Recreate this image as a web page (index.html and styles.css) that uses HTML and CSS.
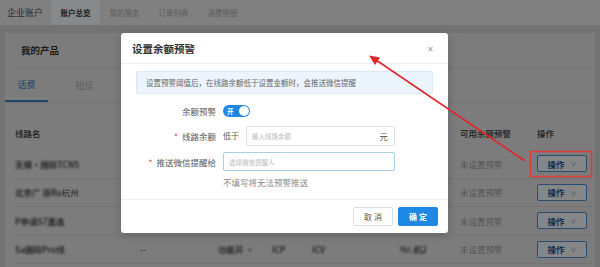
FILE: index.html
```html
<!DOCTYPE html>
<html lang="zh-CN">
<head>
    <meta charset="UTF-8">
    <meta name="viewport" content="width=device-width, initial-scale=1.0">
    <title>设置余额预警 - 企业账户</title>
    <link rel="stylesheet" href="styles.css">
</head>
<body>
    <div class="page">
        <nav class="topnav">
            <div class="brand">企业账户</div>
            <a class="nav-tab active">账户总览</a>
            <a class="nav-tab">我的服务</a>
            <a class="nav-tab">订单列表</a>
            <a class="nav-tab">消费明细</a>
        </nav>

        <div class="main">
            <div class="card">
                <div class="card-header">我的产品</div>
                <div class="tabs">
                    <div class="tab active">话费</div>
                    <div class="tab">短信</div>
                </div>

                <!-- middle columns sit under the dialog, so only the visible cells carry text -->
                <div class="table">
                    <div class="tr th">
                        <div>线路名</div>
                        <div></div>
                        <div></div>
                        <div></div>
                        <div></div>
                        <div></div>
                        <div>可用余额预警</div>
                        <div>操作</div>
                    </div>
                    <div class="tr">
                        <div class="blur">无锡·国际TCN5</div>
                        <div></div><div></div><div></div><div></div><div></div>
                        <div class="muted">未设置预警</div>
                        <div><button class="op-btn">操作 <span class="chev">∨</span></button></div>
                    </div>
                    <div class="tr">
                        <div><span class="blur">北京广 浙Ru</span>杭州</div>
                        <div></div><div></div><div></div><div></div><div></div>
                        <div class="muted">未设置预警</div>
                        <div><button class="op-btn">操作 <span class="chev">∨</span></button></div>
                    </div>
                    <div class="tr">
                        <div class="blur">P申请S7直连</div>
                        <div></div><div></div><div></div><div></div><div></div>
                        <div class="muted">未设置预警</div>
                        <div><button class="op-btn">操作 <span class="chev">∨</span></button></div>
                    </div>
                    <div class="tr">
                        <div class="blur">Sa国际Pro线</div>
                        <div>--</div>
                        <div class="blur">功能开 ·</div>
                        <div class="blur">ICP</div>
                        <div class="blur">ICV</div>
                        <div class="blur">%!.机2</div>
                        <div class="muted">未设置预警</div>
                        <div><button class="op-btn">操作 <span class="chev">∨</span></button></div>
                    </div>
                </div>
            </div>
        </div>

        <div class="mask"></div>

        <div class="modal">
            <div class="modal-header">
                <span class="modal-title">设置余额预警</span>
                <span class="modal-close">✕</span>
            </div>
            <div class="modal-body">
                <div class="alert">设置预警阈值后，在线路余额低于设置金额时，会推送微信提醒</div>
                <div class="form">
                    <div class="form-row row-switch">
                        <label class="form-label">余额预警</label>
                        <div class="switch"><span class="switch-text">开</span><span class="knob"></span></div>
                    </div>
                    <div class="form-row row-input">
                        <label class="form-label"><span class="req">*</span>线路余额</label>
                        <div class="inline">
                            <span class="prefix">低于</span>
                            <div class="input amount">
                                <span class="placeholder">输入线路余额</span>
                                <span class="suffix">元</span>
                            </div>
                        </div>
                    </div>
                    <div class="form-row row-input">
                        <label class="form-label"><span class="req">*</span>推送微信提醒给</label>
                        <div class="input select focus">
                            <span class="placeholder">选择微信提醒人</span>
                        </div>
                    </div>
                    <div class="form-help">不填写将无法预警推送</div>
                </div>
            </div>
            <div class="modal-footer">
                <button class="btn btn-default">取 消</button>
                <button class="btn btn-primary">确 定</button>
            </div>
        </div>

        <svg class="annotation" width="600" height="267" viewBox="0 0 600 267">
            <rect x="530.5" y="151.5" width="61" height="25" fill="none" stroke="#e23a36" stroke-width="1.5"/>
            <line x1="525" y1="161" x2="376" y2="60" stroke="#e0262a" stroke-width="1.6"/>
            <polygon points="369,55.5 380,57.6 375,65" fill="#e0262a"/>
        </svg>
    </div>
</body>
</html>
```

FILE: styles.css
```css
:root {
    --primary: #1e88e5;
    --text: #333;
    --gray: #666;
    --light-text: #999;
    --border: #dcdfe6;
    --danger: #e84a4a;
}

* {
    margin: 0;
    padding: 0;
    box-sizing: border-box;
}

body {
    font-family: "Noto Sans CJK SC", "Noto Sans", sans-serif;
    background: #d4d4d4;
    color: var(--text);
}

.page {
    position: relative;
    width: 600px;
    height: 267px;
    overflow: hidden;
}

/* top navigation */
.topnav {
    display: flex;
    height: 25px;
    background: #ececec;
}

.brand {
    display: flex;
    align-items: center;
    padding: 0 8px 0 7px;
    font-size: 9px;
    color: #555;
}

.nav-tab {
    width: 49px;
    display: flex;
    align-items: center;
    justify-content: center;
    font-size: 7.5px;
    color: #aaa;
}

.nav-tab.active {
    background: #fbfdff;
    color: #333;
    font-weight: 600;
}

/* product card */
.main {
    padding: 8px 5px 0 5px;
}

.card {
    background: #e6e6e6;
    height: 240px;
}

.card-header {
    height: 35px;
    margin-left: 13px;
    border-bottom: 1px solid #d2d2d2;
    display: flex;
    align-items: center;
    padding-left: 3px;
    font-size: 9.5px;
    font-weight: 700;
    color: #333;
}

.tabs {
    display: flex;
    gap: 15px;
    height: 35px;
    border-bottom: 1px solid #d2d2d2;
}

.tab {
    width: 43px;
    display: flex;
    align-items: center;
    justify-content: center;
    font-size: 9px;
    color: #aaa;
}

.tab.active {
    color: #3b7fc4;
    border-bottom: 2px solid #3b7fc4;
}

.table {
    margin-top: 13px;
    padding: 0 3px 0 10px;
}

.tr {
    display: grid;
    grid-template-columns: 125px 78px 54px 40px 88px 60px 77px 1fr;
    align-items: center;
    height: 28.5px;
    border-bottom: 1px solid #d8d8d8;
    font-size: 8.5px;
    color: #444;
    white-space: nowrap;
}

.tr.th {
    height: 34px;
    color: #333;
    font-weight: 500;
    border-bottom: none;
}

.blur {
    filter: blur(0.8px);
    color: #222;
    font-weight: 500;
}

.muted {
    color: #9a9a9a;
}

.op-btn {
    width: 50px;
    height: 17px;
    border: 1px solid #4c8fd0;
    border-radius: 2px;
    background: #f4f8fc;
    color: #1d5a96;
    font-family: inherit;
    font-size: 8.5px;
    font-weight: 700;
    display: flex;
    align-items: center;
    justify-content: center;
    gap: 6px;
}

.chev {
    font-size: 6px;
    font-weight: 400;
    color: #6b8fb3;
}

/* dim layer */
.mask {
    position: absolute;
    inset: 0;
    background: rgba(0, 0, 0, 0.46);
}

/* dialog */
.modal {
    position: absolute;
    left: 121px;
    top: 33px;
    width: 327px;
    height: 200px;
    background: #fff;
    border-radius: 3px;
    box-shadow: 0 2px 10px rgba(0, 0, 0, 0.2);
    display: flex;
    flex-direction: column;
}

.modal-header {
    height: 31px;
    padding: 0 11px 0 11px;
    display: flex;
    align-items: center;
    justify-content: space-between;
    border-bottom: 1px solid #eee;
}

.modal-title {
    font-size: 10.5px;
    font-weight: 700;
    color: #333;
}

.modal-close {
    font-size: 7.5px;
    color: #999;
    margin-right: 3px;
}

.modal-body {
    flex: 1;
    padding: 7px 15px 0 15px;
}

.alert {
    height: 23px;
    display: flex;
    align-items: center;
    padding: 0 9px;
    background: #ecf5fd;
    border: 1px solid #d9ebfa;
    border-radius: 2px;
    font-size: 7.5px;
    color: #666;
}

.form {
    margin-top: 9px;
}

.form-row {
    display: grid;
    grid-template-columns: 80px 1fr;
    column-gap: 7px;
    align-items: center;
}

.row-switch {
    height: 16px;
    margin-bottom: 6px;
}

.row-input {
    height: 21px;
    margin-bottom: 5px;
}

.form-label {
    text-align: right;
    font-size: 8.5px;
    color: #555;
}

.req {
    color: var(--danger);
    margin-right: 4px;
}

.switch {
    width: 27px;
    height: 12px;
    border-radius: 6px;
    background: var(--primary);
    display: flex;
    align-items: center;
    justify-content: space-between;
    padding: 0 1px 0 4px;
}

.switch-text {
    font-size: 6.5px;
    color: #fff;
    font-weight: 700;
}

.knob {
    width: 10px;
    height: 10px;
    border-radius: 50%;
    background: #fff;
}

.inline {
    display: flex;
    align-items: center;
    gap: 7px;
}

.prefix {
    font-size: 8px;
    color: #555;
}

.input {
    height: 20px;
    border: 1px solid #e0e0e0;
    border-radius: 2px;
    display: flex;
    align-items: center;
    justify-content: space-between;
    padding: 0 6px 0 5px;
}

.input.amount {
    width: 149px;
}

.input.select {
    width: 172px;
    height: 19px;
}

.input.focus {
    border-color: #a9cfe8;
}

.placeholder {
    font-size: 6.5px;
    color: #bbb;
}

.suffix {
    font-size: 8.5px;
    color: #555;
}

.form-help {
    margin-left: 87px;
    margin-top: -1px;
    font-size: 8.5px;
    line-height: 12px;
    color: #888;
}

.modal-footer {
    height: 34px;
    border-top: 1px solid #eee;
    display: flex;
    justify-content: flex-end;
    align-items: flex-start;
    gap: 5px;
    padding: 7px 10px 0 0;
}

.btn {
    width: 40px;
    height: 19px;
    border-radius: 2px;
    font-family: inherit;
    font-size: 8px;
}

.btn-default {
    background: #fff;
    border: 1px solid #ddd;
    color: #555;
}

.btn-primary {
    background: var(--primary);
    border: 1px solid var(--primary);
    color: #fff;
    font-weight: 700;
}

/* red annotation drawn on top of the screenshot */
.annotation {
    position: absolute;
    left: 0;
    top: 0;
    pointer-events: none;
}
```
